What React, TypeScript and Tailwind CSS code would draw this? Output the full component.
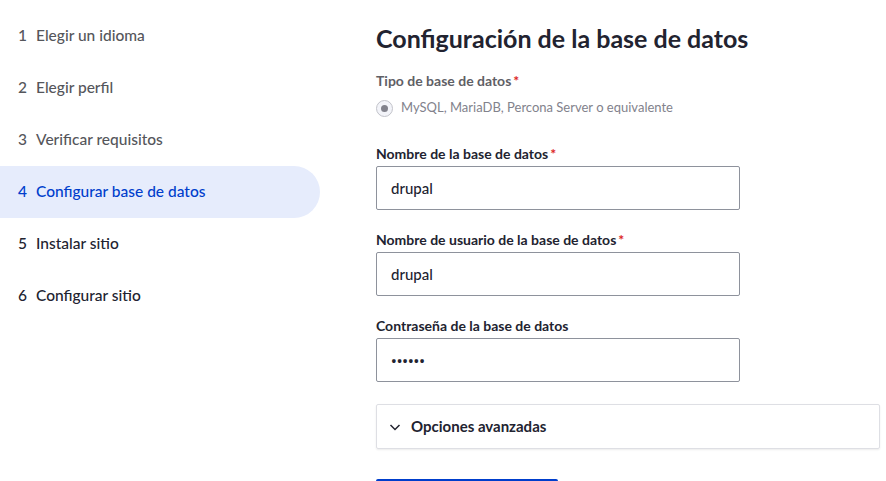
import React from 'react';

const steps = [
  { n: 1, label: 'Elegir un idioma', state: 'done' },
  { n: 2, label: 'Elegir perfil', state: 'done' },
  { n: 3, label: 'Verificar requisitos', state: 'done' },
  { n: 4, label: 'Configurar base de datos', state: 'active' },
  { n: 5, label: 'Instalar sitio', state: 'todo' },
  { n: 6, label: 'Configurar sitio', state: 'todo' },
];

const Field: React.FC<{ label: string; required?: boolean; value: string; password?: boolean; mt: string }> = ({
  label,
  required,
  value,
  password,
  mt,
}) => (
  <div className={mt}>
    <div className="text-[14px] leading-[18px] font-bold text-[#222330]">
      {label}
      {required && <span className="text-[#dc2323] ml-[2px]">*</span>}
    </div>
    <input
      type={password ? 'password' : 'text'}
      defaultValue={value}
      className={
        'mt-[3px] block w-[364px] h-[44px] px-[14px] text-[15px] font-medium text-[#222330] border border-[#8e929c] rounded-[2px] outline-none ' +
        (password ? "font-['Noto_Sans',sans-serif]" : '')
      }
    />
  </div>
);

export default function App() {
  return (
    <div className="w-[886px] h-[481px] overflow-hidden bg-white flex font-['Lato',sans-serif]">
      {/* Pasos */}
      <nav className="w-[320px] shrink-0 pt-[10px]">
        {steps.map((s) => (
          <div
            key={s.n}
            className={
              'h-[52px] flex items-center pl-[18px] text-[15.5px] font-medium ' +
              (s.state === 'active'
                ? 'bg-[#e6ecfc] text-[#003ecc] rounded-r-full'
                : s.state === 'done'
                ? 'text-[#55565b]'
                : 'text-[#222330]')
            }
          >
            <span>{s.n}</span>
            <span className="ml-[9px]">{s.label}</span>
          </div>
        ))}
      </nav>

      {/* Formulario */}
      <main className="ml-[56px] pt-[23px] flex-1">
        <h1 className="text-[25px] leading-[30px] font-bold text-[#222330]">Configuración de la base de datos</h1>

        <div className="mt-[19px] text-[14px] leading-[18px] font-bold text-[#5f6066]">
          Tipo de base de datos<span className="text-[#dc2323] ml-[2px]">*</span>
        </div>
        <div className="mt-[9px] flex items-center h-[18px]">
          <span className="w-[17px] h-[17px] rounded-full border-[1.5px] border-[#c2c3ca] bg-[#f3f4f9] flex items-center justify-center">
            <span className="w-[7px] h-[7px] rounded-full bg-[#82828c]" />
          </span>
          <span className="ml-[8px] text-[13px] text-[#82828c]">MySQL, MariaDB, Percona Server o equivalente</span>
        </div>

        <Field mt="mt-[28px]" label="Nombre de la base de datos" required value="drupal" />
        <Field mt="mt-[21px]" label="Nombre de usuario de la base de datos" required value="drupal" />
        <Field mt="mt-[21px]" label="Contraseña de la base de datos" value="drupal" password />

        <div className="mt-[22px] w-[504px] h-[45px] border border-[#dedfe4] rounded-[2px] shadow-[0_1px_2px_rgba(0,0,0,0.08)] flex items-center pl-[12px]">
          <svg width="12" height="12" viewBox="0 0 12 12" fill="none" stroke="#222330" strokeWidth="1.5">
            <path d="M1.5 4l4.5 4.5L10.5 4" />
          </svg>
          <span className="ml-[10px] text-[15px] font-bold text-[#222330]">Opciones avanzadas</span>
        </div>

        <button className="mt-[30px] w-[182px] h-[48px] rounded-[2px] bg-[#003ecc] text-white text-[15px] font-bold">
          Guardar y continuar
        </button>
      </main>
    </div>
  );
}
